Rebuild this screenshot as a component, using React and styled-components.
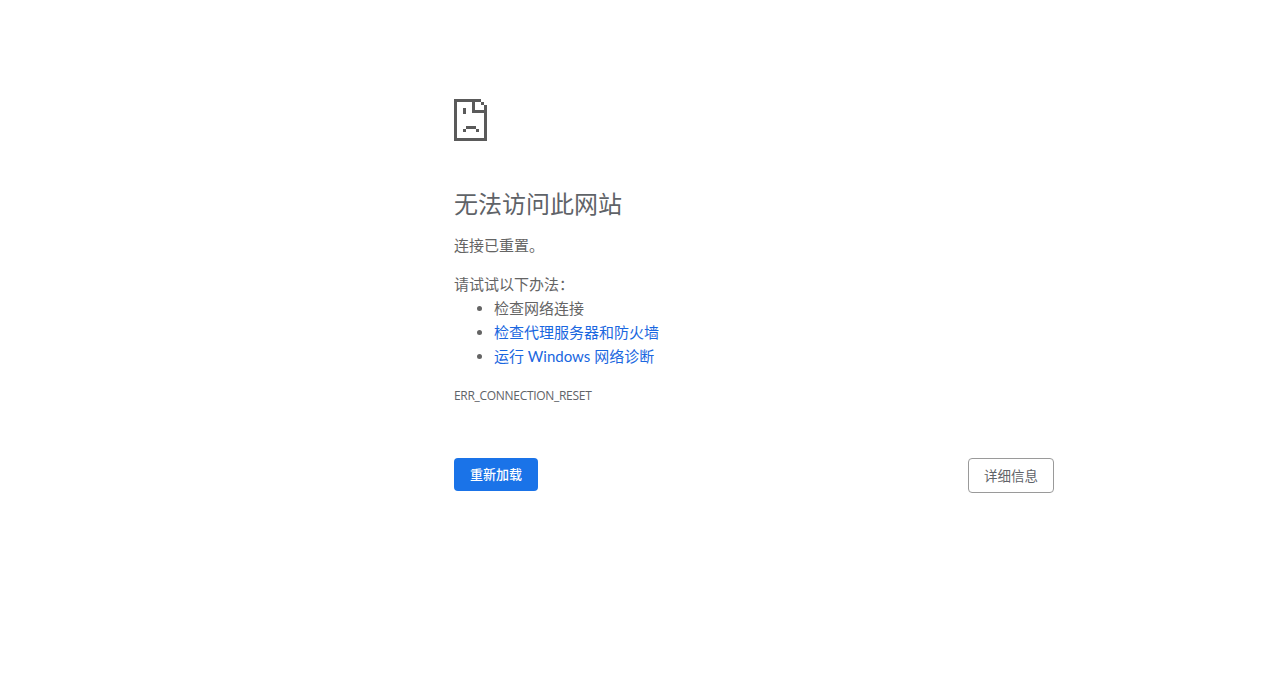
import styled, { createGlobalStyle } from 'styled-components';

const GlobalStyle = createGlobalStyle`
  html, body {
    margin: 0;
    padding: 0;
    background: #fff;
  }
  body {
    font-family: "Lato", "Noto Sans CJK SC", sans-serif;
    font-size: 15px;
    color: #646464;
  }
`;

const Wrapper = styled.main`
  width: 600px;
  margin-left: 454px;
  padding-top: 99px;
`;

const Icon = styled.svg`
  display: block;
  width: 33px;
  height: 42px;
  shape-rendering: crispEdges;
`;

const Title = styled.h1`
  margin: 47px 0 0;
  font-size: 24px;
  font-weight: 400;
  line-height: 32px;
  color: #5f6368;
`;

const Summary = styled.p`
  margin: 13px 0 0;
  line-height: 24px;
`;

const Hint = styled.p`
  margin: 15px 0 0;
  line-height: 24px;
`;

const Suggestions = styled.ul`
  margin: 0;
  padding-left: 40px;
`;

const Suggestion = styled.li`
  line-height: 24px;
`;

const Link = styled.a`
  color: #1a67e0;
  text-decoration: none;
`;

const ErrorCode = styled.div`
  margin-top: 20px;
  font-family: "Open Sans", sans-serif;
  font-size: 12px;
  letter-spacing: -0.3px;
  line-height: 16px;
  color: #5f6368;
`;

const Buttons = styled.div`
  display: flex;
  justify-content: space-between;
  align-items: flex-start;
  margin-top: 54px;
`;

const Button = styled.button`
  height: ${(p) => (p.$primary ? '33px' : '35px')};
  padding: ${(p) => (p.$primary ? '0 16px 2px' : '0 15px 2px')};
  border: ${(p) => (p.$primary ? 'none' : '1px solid #9a9a9a')};
  border-radius: 4px;
  background: ${(p) => (p.$primary ? '#1a73e8' : '#fff')};
  color: ${(p) => (p.$primary ? '#fff' : '#5f6368')};
  font-family: inherit;
  font-size: ${(p) => (p.$primary ? '13px' : '13.5px')};
  font-weight: ${(p) => (p.$primary ? 500 : 400)};
`;

const SadPage = () => (
  <Icon viewBox="0 0 33 42" fill="#5a5a5a">
    <rect x="0" y="0" width="27" height="3" />
    <rect x="0" y="0" width="3" height="42" />
    <rect x="0" y="39" width="33" height="3" />
    <rect x="30" y="6" width="3" height="36" />
    <rect x="27" y="3" width="3" height="3" />
    <rect x="18" y="0" width="3" height="14" />
    <rect x="18" y="11" width="15" height="3" />
    <rect x="9" y="9" width="3" height="6" />
    <rect x="12" y="27" width="10" height="3" />
    <rect x="9" y="30" width="3" height="3" />
    <rect x="22" y="30" width="3" height="3" />
  </Icon>
);

export default function App() {
  return (
    <>
      <GlobalStyle />
      <Wrapper>
        <SadPage />
        <Title>无法访问此网站</Title>
        <Summary>连接已重置。</Summary>
        <Hint>请试试以下办法：</Hint>
        <Suggestions>
          <Suggestion>检查网络连接</Suggestion>
          <Suggestion>
            <Link href="#">检查代理服务器和防火墙</Link>
          </Suggestion>
          <Suggestion>
            <Link href="#">运行 Windows 网络诊断</Link>
          </Suggestion>
        </Suggestions>
        <ErrorCode>ERR_CONNECTION_RESET</ErrorCode>
        <Buttons>
          <Button $primary>重新加载</Button>
          <Button>详细信息</Button>
        </Buttons>
      </Wrapper>
    </>
  );
}
